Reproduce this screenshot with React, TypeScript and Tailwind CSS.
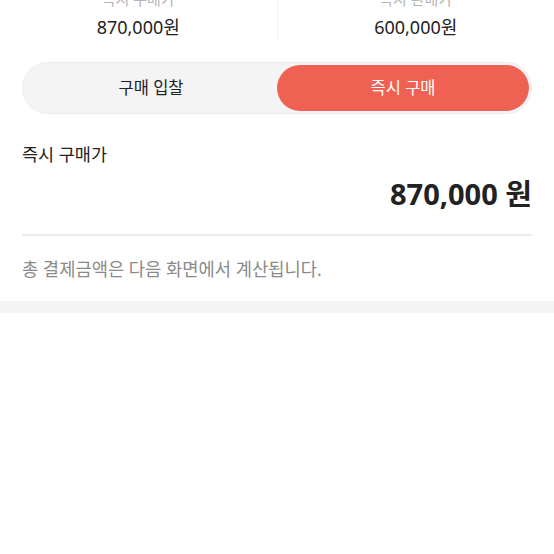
import React, { useState } from "react";

const font = { fontFamily: '"Noto Sans", "Noto Sans CJK KR", sans-serif' };

export default function App() {
  const [tab, setTab] = useState<"bid" | "now">("now");

  return (
    <div className="w-[554px] h-[554px] overflow-hidden bg-white text-[#222]" style={font}>
      {/* price summary */}
      <div className="flex h-[50px] -mt-[10px]">
        <div className="flex flex-1 flex-col items-center">
          <span className="text-[15px] leading-[18px] text-[#b5b5b5]">즉시 구매가</span>
          <span className="mt-[6px] text-[18px] leading-[26px]">870,000원</span>
        </div>
        <div className="w-px bg-[#f0f0f0]" />
        <div className="flex flex-1 flex-col items-center">
          <span className="text-[15px] leading-[18px] text-[#b5b5b5]">즉시 판매가</span>
          <span className="mt-[6px] text-[18px] leading-[26px]">600,000원</span>
        </div>
      </div>

      {/* tabs */}
      <div className="px-[22px] pt-[22px]">
        <div className="flex h-[52px] rounded-full border border-[#ebebeb] bg-[#f4f4f4] p-[2px]">
          <button
            onClick={() => setTab("bid")}
            className={
              "flex-1 rounded-full text-[16.5px] " +
              (tab === "bid" ? "bg-[#ef6253] text-white" : "text-[#222]")
            }
          >
            구매 입찰
          </button>
          <button
            onClick={() => setTab("now")}
            className={
              "flex-1 rounded-full text-[16.5px] " +
              (tab === "now" ? "bg-[#ef6253] text-white" : "text-[#222]")
            }
          >
            즉시 구매
          </button>
        </div>
      </div>

      {/* price */}
      <div className="px-[22px]">
        <div className="pt-[28px] text-[17.5px] leading-[24px]">즉시 구매가</div>
        <div className="mt-[10px] flex justify-end text-[29px] font-bold leading-[36px]">870,000 원</div>
        <div className="mt-[22px] h-[2px] bg-[#ebebeb]" />
        <div className="pt-[22px] text-[17.7px] leading-[22px] text-[#8a8a8a]">
          총 결제금액은 다음 화면에서 계산됩니다.
        </div>
      </div>

      <div className="mt-[21px] h-[12px] bg-[#f4f4f4]" />
    </div>
  );
}
